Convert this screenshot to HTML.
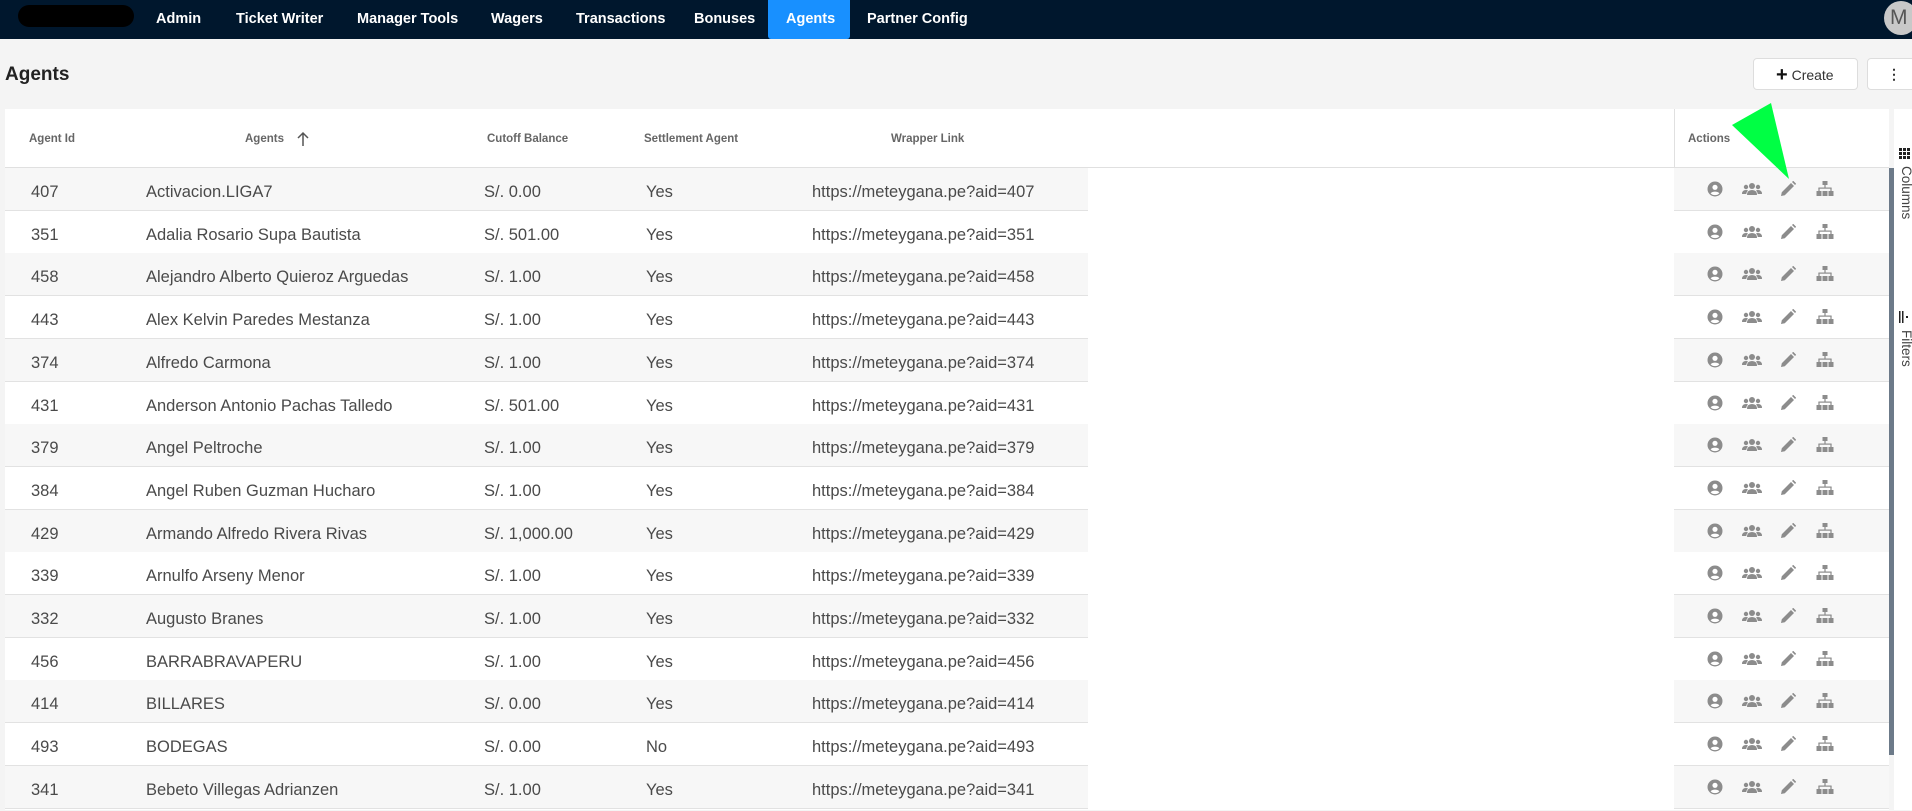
<!DOCTYPE html>
<html><head><meta charset="utf-8"><style>
*{box-sizing:border-box;margin:0;padding:0}
body{width:1912px;height:810px;overflow:hidden;background:#f4f4f4;font-family:"Liberation Sans",Arial,sans-serif;position:relative}
.nav{position:absolute;left:0;top:0;width:1912px;height:39px;background:#00172d}
.logo{position:absolute;left:18px;top:5px;width:116px;height:22px;background:#000;border-radius:11px}
.ni{position:absolute;top:0;height:39px;line-height:38px;color:#fff;font-size:14.5px;font-weight:bold}
.act{background:#1890ff;padding:0 18px;border-radius:0 0 3px 3px}
.av{position:absolute;left:1884px;top:1px;width:34px;height:34px;border-radius:50%;background:#c8c8c8;color:#555;font-size:21px;line-height:34px;padding-left:6px}
h1{position:absolute;left:5px;top:64px;font-size:19px;font-weight:bold;color:#222}
.btn{position:absolute;top:58px;height:32px;background:#fff;border:1px solid #ddd;border-radius:4px;font-size:14px;color:#333;line-height:30px}
.tbl{position:absolute;left:5px;top:109px;width:1884px;height:701px;background:#fff}
.hd{position:absolute;top:0;height:59px;line-height:60px;font-size:11.5px;font-weight:bold;color:#666}
.row{position:absolute;left:0;width:1884px;height:43px}
.bg1{position:absolute;left:0;top:0;width:1083px;height:42px}
.bg2{position:absolute;left:1669px;top:0;width:215px;height:42px}
.ln1{position:absolute;left:0;bottom:0;width:1083px;height:1px;background:#e2e2e2}
.ln2{position:absolute;left:1669px;bottom:0;width:215px;height:1px;background:#e2e2e2}
.c{position:absolute;top:3px;line-height:42px;font-size:16.5px;color:#4a4a4a;white-space:nowrap}
.ic{position:absolute;top:13px}
</style></head><body>
<div class="nav">
<div class="logo"></div>
<div class="ni" style="left:156px">Admin</div>
<div class="ni" style="left:236px">Ticket Writer</div>
<div class="ni" style="left:357px">Manager Tools</div>
<div class="ni" style="left:491px">Wagers</div>
<div class="ni" style="left:576px">Transactions</div>
<div class="ni" style="left:694px">Bonuses</div>
<div class="ni act" style="left:768px;width:82px">Agents</div>
<div class="ni" style="left:867px">Partner Config</div>
<div class="av">M</div>
</div>
<h1>Agents</h1>
<div class="btn" style="left:1753px;width:105px;padding-left:22px"><span style="font-size:20px;font-weight:bold;color:#111;position:relative;top:1px">+</span>&nbsp;Create</div>
<div class="btn" style="left:1867px;width:50px;padding-left:19px;font-weight:bold">⋮</div>
<div class="tbl">
<div class="hd" style="left:24px">Agent Id</div>
<div class="hd" style="left:240px">Agents</div>
<svg style="position:absolute;left:292px;top:22px" width="12" height="16" viewBox="0 0 12 16"><path d="M6 2v13M1 7l5-5 5 5" stroke="#555" stroke-width="1.5" fill="none"/></svg>
<div class="hd" style="left:482px">Cutoff Balance</div>
<div class="hd" style="left:639px">Settlement Agent</div>
<div class="hd" style="left:886px">Wrapper Link</div>
<div style="position:absolute;left:1669px;top:0;width:1px;height:59px;background:#e0e0e0"></div>
<div class="hd" style="left:1683px">Actions</div>
<div style="position:absolute;left:0;top:58px;width:1884px;height:1px;background:#e0e0e0"></div>
<div id="rows"></div>
</div>
<div style="position:absolute;left:1889px;top:168px;width:5px;height:587px;background:#6c7a89"></div>
<div style="position:absolute;left:1894px;top:109px;width:18px;height:701px;background:#fff"></div>
<svg style="position:absolute;left:1898px;top:147px" width="14" height="12"><g fill="#222"><rect x="1" y="1" width="3" height="3"/><rect x="5" y="1" width="3" height="3"/><rect x="9" y="1" width="3" height="3"/><rect x="1" y="5" width="3" height="3"/><rect x="5" y="5" width="3" height="3"/><rect x="9" y="5" width="3" height="3"/><rect x="1" y="9" width="3" height="3"/><rect x="5" y="9" width="3" height="3"/><rect x="9" y="9" width="3" height="3"/></g></svg>
<div style="position:absolute;left:1914px;top:166px;transform:rotate(90deg);transform-origin:0 0;font-size:13.5px;color:#444">Columns</div>
<svg style="position:absolute;left:1898px;top:311px" width="12" height="12"><g fill="#222"><rect x="1" y="0" width="1.5" height="12"/><rect x="4" y="0" width="1.5" height="12"/><rect x="8" y="5" width="2" height="2"/></g></svg>
<div style="position:absolute;left:1914px;top:330px;transform:rotate(90deg);transform-origin:0 0;font-size:13.5px;color:#444">Filters</div>
<svg style="position:absolute;left:0;top:0" width="1912" height="810"><polygon points="1732,125 1771,103 1789,179" fill="#00ff44"/></svg>
<script>
var d=[["407","Activacion.LIGA7","0.00","Yes"],["351","Adalia Rosario Supa Bautista","501.00","Yes"],["458","Alejandro Alberto Quieroz Arguedas","1.00","Yes"],["443","Alex Kelvin Paredes Mestanza","1.00","Yes"],["374","Alfredo Carmona","1.00","Yes"],["431","Anderson Antonio Pachas Talledo","501.00","Yes"],["379","Angel Peltroche","1.00","Yes"],["384","Angel Ruben Guzman Hucharo","1.00","Yes"],["429","Armando Alfredo Rivera Rivas","1,000.00","Yes"],["339","Arnulfo Arseny Menor","1.00","Yes"],["332","Augusto Branes","1.00","Yes"],["456","BARRABRAVAPERU","1.00","Yes"],["414","BILLARES","0.00","Yes"],["493","BODEGAS","0.00","No"],["341","Bebeto Villegas Adrianzen","1.00","Yes"]];
var g='#8c8c8c',h='';
var icons='<svg class="ic" style="left:1702px" width="16" height="16" viewBox="0 0 16 16"><circle cx="8" cy="8" r="7.5" fill="'+g+'"/><circle cx="8" cy="6.3" r="2.6" fill="#fff"/><path d="M3.6 12.2a5.6 4 0 0 1 8.8 0A6 6 0 0 1 3.6 12.2z" fill="#fff"/></svg>'+
'<svg class="ic" style="left:1737px" width="20" height="16" viewBox="0 0 20 16"><g fill="'+g+'"><circle cx="10" cy="5" r="3"/><circle cx="4" cy="6" r="2.2"/><circle cx="16" cy="6" r="2.2"/><path d="M5 14q0-5 5-5t5 5z"/><path d="M0 13q0-4 4-4 1.5 0 2 .7Q4.3 11 4.3 13z"/><path d="M20 13q0-4-4-4-1.5 0-2 .7 1.7 1.3 1.7 3.3z"/></g></svg>'+
'<svg class="ic" style="left:1775px" width="16" height="16" viewBox="0 0 16 16"><g fill="'+g+'"><path d="M1 15l.8-3.8L11 2l3 3-9.2 9.2z"/><path d="M12 1l1.2-1.2 3 3L15 4z"/></g></svg>'+
'<svg class="ic" style="left:1811px" width="18" height="16" viewBox="0 0 18 16"><g fill="'+g+'"><rect x="6.5" y="0" width="5" height="4"/><rect x="8.4" y="4" width="1.2" height="3"/><rect x="2.4" y="6.5" width="13.2" height="1.2"/><rect x="2.4" y="7" width="1.2" height="3"/><rect x="14.4" y="7" width="1.2" height="3"/><rect x="0.5" y="10" width="5" height="5"/><rect x="6.5" y="10" width="5" height="5"/><rect x="12.5" y="10" width="5" height="5"/></g></svg>';
for(var i=0;i<d.length;i++){var r=d[i],bg=i%2==0?'#f7f7f7':'#fff';
h+='<div class="row" style="top:'+(59+i*42.7)+'px"><div class="bg1" style="background:'+bg+'"></div><div class="bg2" style="background:'+bg+'"></div><div class="ln1"></div><div class="ln2"></div>'+
'<div class="c" style="left:26px">'+r[0]+'</div><div class="c" style="left:141px">'+r[1]+'</div><div class="c" style="left:479px">S/. '+r[2]+'</div><div class="c" style="left:641px">'+r[3]+'</div><div class="c" style="left:807px">https://meteygana.pe?aid='+r[0]+'</div>'+icons+'</div>';}
document.getElementById('rows').innerHTML=h;
</script>
</body></html>
